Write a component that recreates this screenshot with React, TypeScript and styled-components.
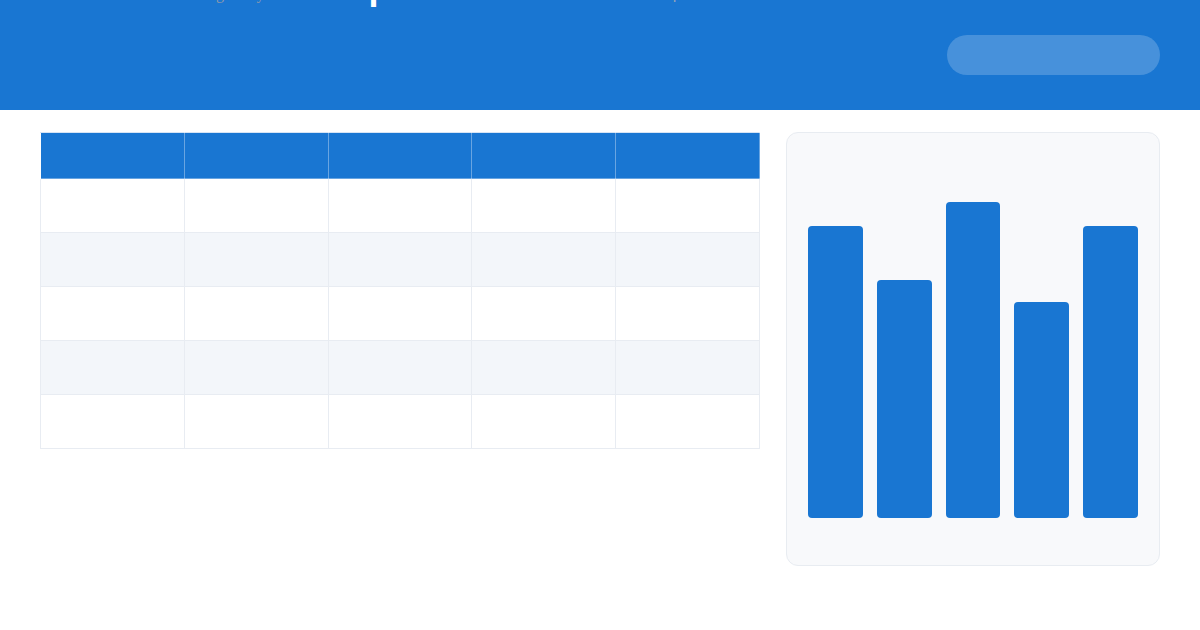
import styled, { createGlobalStyle } from 'styled-components';

const GlobalStyle = createGlobalStyle`
    * { box-sizing: border-box; }
    body {
        margin: 0;
        background: #ffffff;
        font-family: 'Liberation Sans', Arial, sans-serif;
    }
`;

const Page = styled.div`
    width: 1200px;
    height: 630px;
    overflow: hidden;
    background: #ffffff;
`;

const Header = styled.header`
    height: 110px;
    padding: 0 40px;
    background: #1976d2;
    display: flex;
    flex-direction: column;
`;

// title line scrolled above the top edge, only descenders show
const Crumbs = styled.div`
    display: flex;
    align-items: baseline;
    height: 36px;
    margin-top: -31px;
    margin-bottom: -5px;
    white-space: nowrap;
`;

const Tagline = styled.span`
    margin-left: 160px;
    font-family: 'Liberation Serif', 'Times New Roman', serif;
    font-size: 16px;
    line-height: 16px;
    color: #8d99ad;
`;

const Title = styled.span`
    margin-left: 58px;
    font-size: 36px;
    line-height: 36px;
    font-weight: 700;
    color: #ffffff;
`;

const Divider = styled.span`
    margin-left: 234px;
    font-size: 16px;
    line-height: 16px;
    color: #9aa6b8;
`;

const HeaderBar = styled.div`
    flex: 1;
    display: flex;
    align-items: center;
    justify-content: flex-end;
`;

const Pill = styled.div`
    width: 213px;
    height: 40px;
    border-radius: 20px;
    background: rgba(255, 255, 255, 0.2);
`;

const Main = styled.main`
    display: flex;
    align-items: flex-start;
    gap: 26px;
    padding: 22px 40px;
`;

const Table = styled.table`
    width: 720px;
    border-collapse: collapse;
    table-layout: fixed;
`;

const Th = styled.th`
    height: 46px;
    background: #1976d2;
    border: 1px solid rgba(255, 255, 255, 0.35);
    border-top-color: #d6e4f5;
`;

const Row = styled.tr<{ $alt?: boolean }>`
    background: ${p => (p.$alt ? '#f3f6fa' : '#ffffff')};
`;

const Td = styled.td`
    height: 54px;
    border: 1px solid #e8ecf2;
`;

const ChartCard = styled.div`
    width: 374px;
    height: 434px;
    padding: 0 21px 47px;
    background: #f8f9fb;
    border: 1px solid #e8ecf1;
    border-radius: 12px;
    display: flex;
    align-items: flex-end;
    gap: 14px;
`;

const Bar = styled.div`
    flex: 1;
    border-radius: 4px;
    background: #1976d2;
`;

const bars = [292, 238, 316, 216, 292];

export default function App() {
    return (
        <Page>
            <GlobalStyle />
            <Header>
                <Crumbs>
                    <Tagline>Digital by</Tagline>
                    <Title>Report</Title>
                    <Divider>|</Divider>
                </Crumbs>
                <HeaderBar>
                    <Pill />
                </HeaderBar>
            </Header>
            <Main>
                <Table>
                    <thead>
                        <tr>
                            {[0, 1, 2, 3, 4].map(i => <Th key={i} />)}
                        </tr>
                    </thead>
                    <tbody>
                        {[0, 1, 2, 3, 4].map(r => (
                            <Row key={r} $alt={r % 2 === 1}>
                                {[0, 1, 2, 3, 4].map(c => <Td key={c} />)}
                            </Row>
                        ))}
                    </tbody>
                </Table>
                <ChartCard>
                    {bars.map((h, i) => (
                        <Bar key={i} style={{ height: h }} />
                    ))}
                </ChartCard>
            </Main>
        </Page>
    );
}
